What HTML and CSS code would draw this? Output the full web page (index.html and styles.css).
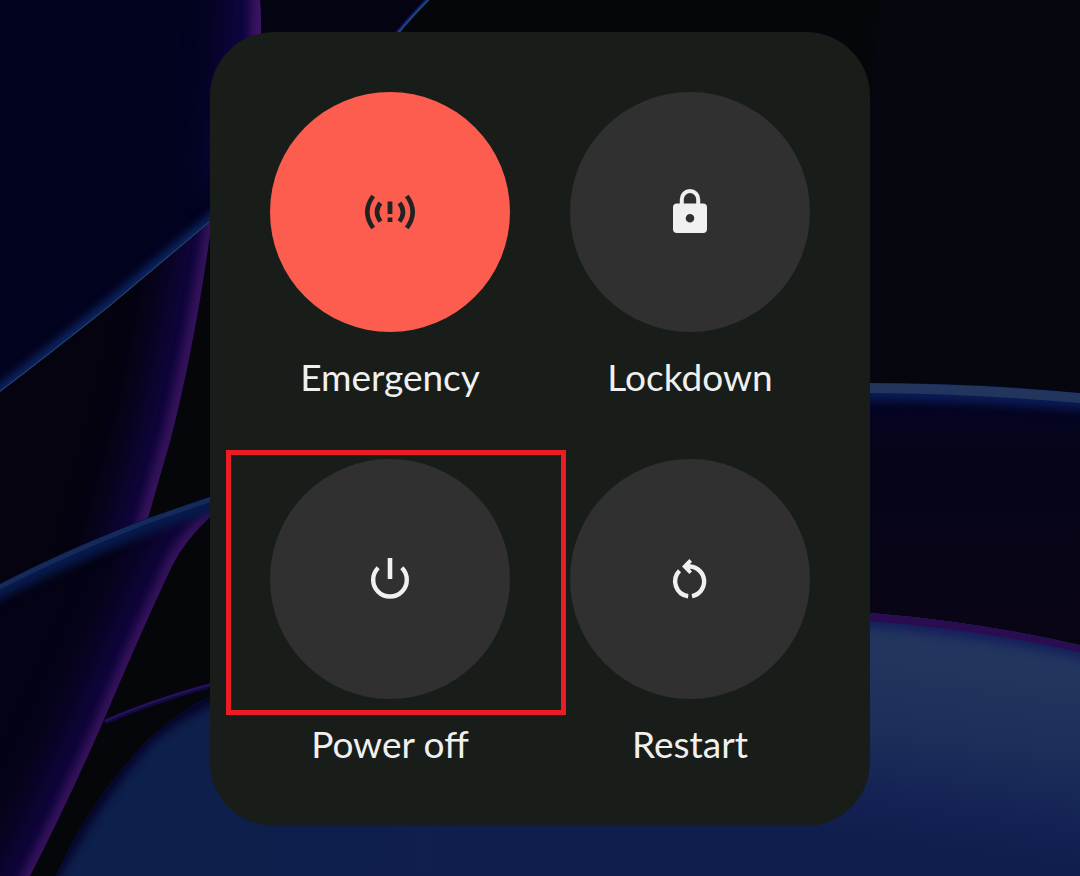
FILE: index.html
```html
<!DOCTYPE html>
<html lang="en">
<head>
    <meta charset="UTF-8">
    <meta name="viewport" content="width=device-width, initial-scale=1.0">
    <title>Power menu</title>
    <link rel="stylesheet" href="styles.css">
</head>
<body>
    <!-- Wallpaper -->
    <svg class="wallpaper" viewBox="0 0 1080 876" preserveAspectRatio="xMidYMid slice" aria-hidden="true">
        <defs>
            <filter id="soft" filterUnits="userSpaceOnUse" x="-100" y="-100" width="1280" height="1080" color-interpolation-filters="sRGB"><feGaussianBlur stdDeviation="4"/></filter>
            <filter id="wide" filterUnits="userSpaceOnUse" x="-100" y="-100" width="1280" height="1080" color-interpolation-filters="sRGB"><feGaussianBlur stdDeviation="20"/></filter>
            <linearGradient id="rightSheet" x1="0" y1="0" x2="0" y2="1">
                <stop offset="0" stop-color="#04042a"/>
                <stop offset="0.3" stop-color="#050518"/>
                <stop offset="1" stop-color="#0a0516"/>
            </linearGradient>
            <linearGradient id="domeFill" gradientUnits="userSpaceOnUse" x1="980" y1="670" x2="955" y2="850">
                <stop offset="0" stop-color="#22355e"/>
                <stop offset="0.4" stop-color="#1c2e5a"/>
                <stop offset="0.75" stop-color="#142354"/>
                <stop offset="1" stop-color="#101e4e"/>
            </linearGradient>
            <linearGradient id="domeLeft" gradientUnits="userSpaceOnUse" x1="180" y1="0" x2="500" y2="0">
                <stop offset="0" stop-color="#0d1f4b"/>
                <stop offset="1" stop-color="#0d1f4b" stop-opacity="0"/>
            </linearGradient>
            <clipPath id="clipA"><path d="M0 0H260Q266 60 240 190L210 222Q160 264 110 306Q50 354 0 392Z"/></clipPath>
            <clipPath id="clipB"><path d="M0 392Q50 354 110 306L212 220Q196 340 171 438L148 518L0 588Z"/></clipPath>
            <clipPath id="clipC"><path d="M0 584Q60 552 148 518L212 496V515Q185 540 172 566Q140 634 103 722Q66 806 30 876H0Z"/></clipPath>
            <clipPath id="clipD"><path d="M868 383Q980 383 1080 393V650H868Z"/></clipPath>
            <clipPath id="clipE"><path d="M56 876Q90 800 148 740Q180 710 212 696Q520 560 870 613Q980 622 1080 645V876Z"/></clipPath>
        </defs>
        <rect width="1080" height="876" fill="#05060a"/>
        <path d="M880 0H1080V400H840Z" fill="#06070e"/>
        <!-- top strip -->
        <path d="M250 0H428L397 33H250Z" fill="#030312"/>
        <path d="M429 -2Q411 16 397 33" fill="none" stroke="#10106a" stroke-width="4"/>
        <path d="M430 -2Q412 16 398 33" fill="none" stroke="#1c4a70" stroke-width="2"/>
        <!-- left sheets -->
        <g clip-path="url(#clipB)">
            <rect y="200" width="220" height="400" fill="#04030f"/>
            <path d="M224 150Q196 340 171 438L130 580" fill="none" stroke="#120544" stroke-width="66" filter="url(#wide)"/>
            <path d="M217 200Q196 340 171 438L140 545" fill="none" stroke="#35125a" stroke-width="18" filter="url(#soft)"/>
        </g>
        <g clip-path="url(#clipA)">
            <rect width="270" height="400" fill="#02031f"/>
            <path d="M258 -60Q266 60 240 190" fill="none" stroke="#12064a" stroke-width="60" filter="url(#wide)"/>
            <path d="M259 -40Q266 60 240 190" fill="none" stroke="#3a1360" stroke-width="20" filter="url(#soft)"/>
            <path d="M-20 408Q50 354 110 306L230 206" fill="none" stroke="#0c2462" stroke-width="14" filter="url(#soft)"/>
            <path d="M0 392Q50 354 110 306L210 222" fill="none" stroke="#2a4664" stroke-width="2"/>
        </g>
        <g clip-path="url(#clipC)">
            <rect y="480" width="220" height="396" fill="#040316"/>
            <path d="M214 512Q185 540 172 566Q140 634 103 722Q66 806 5 926" fill="none" stroke="#120544" stroke-width="60" filter="url(#wide)"/>
            <path d="M214 512Q185 540 172 566Q140 634 103 722Q66 806 20 896" fill="none" stroke="#35125a" stroke-width="16" filter="url(#soft)"/>
            <path d="M-20 598Q60 557 148 523L230 495" fill="none" stroke="#071a4c" stroke-width="20" filter="url(#soft)"/>
            <path d="M-10 592Q60 555 148 521L220 496" fill="none" stroke="#132a5a" stroke-width="5"/>
        </g>
        <path d="M105 722Q150 702 212 685" fill="none" stroke="#100a40" stroke-width="5"/>
        <path d="M105 721Q150 701 212 684" fill="none" stroke="#2b1258" stroke-width="2"/>
        <!-- right sheet -->
        <g clip-path="url(#clipD)">
            <rect x="860" y="380" width="220" height="260" fill="url(#rightSheet)"/>
            <path d="M830 388Q980 388 1120 401" fill="none" stroke="#0a1c56" stroke-width="24" filter="url(#soft)"/>
            <path d="M850 388Q980 388 1100 400" fill="none" stroke="#22355c" stroke-width="10"/>
        </g>
        <!-- dome at the bottom -->
        <g clip-path="url(#clipE)">
            <rect y="560" width="1080" height="316" fill="url(#domeFill)"/>
            <rect y="560" width="500" height="316" fill="url(#domeLeft)"/>
            <path d="M20 920Q80 800 142 732Q174 704 230 680" fill="none" stroke="#06042a" stroke-width="30" filter="url(#soft)"/>
            <path d="M840 614Q980 624 1110 654" fill="none" stroke="#16205c" stroke-width="22" filter="url(#soft)"/>
            <path d="M860 616Q980 624 1090 650" fill="none" stroke="#2a0d50" stroke-width="9"/>
        </g>
    </svg>

    <!-- Power menu -->
    <main class="menu">
        <div class="item">
            <button class="circle emergency" id="emergency" aria-labelledby="emergency-label">
                <svg viewBox="0 0 60 60" fill="none" stroke="currentColor" stroke-width="4.6">
                    <path d="M13.2 14Q1.4 30 13.2 46M20.5 21Q13.5 30 20.5 39.5M39.5 21Q46.5 30 39.5 39.5M46.8 14Q58.6 30 46.8 46"/>
                    <path d="M30 19.5V32M30 35.5V40" stroke-width="4.8"/>
                </svg>
            </button>
            <label class="label" id="emergency-label" for="emergency">Emergency</label>
        </div>
        <div class="item">
            <button class="circle" id="lockdown" aria-labelledby="lockdown-label">
                <svg viewBox="0 0 60 60" fill="currentColor">
                    <path d="M21.8 23V17.3a8.2 8.2 0 0 1 16.4 0V23" fill="none" stroke="currentColor" stroke-width="4"/>
                    <path fill-rule="evenodd" d="M17 21.5H43a4 4 0 0 1 4 4V47a4 4 0 0 1-4 4H17a4 4 0 0 1-4-4V25.500a4 4 0 0 1 4-4ZM30 32a4.300 4.300 0 1 0 0 8.600a4.300 4.300 0 1 0 0-8.600Z"/>
                </svg>
            </button>
            <label class="label" id="lockdown-label" for="lockdown">Lockdown</label>
        </div>
        <div class="item selected">
            <button class="circle" id="power" aria-labelledby="power-label">
                <svg viewBox="0 0 60 60" fill="none" stroke="currentColor" stroke-width="4.4">
                    <path d="M18.2 18.8A16.800 16.800 0 1 0 41.8 18.8"/>
                    <path d="M30 9V30" stroke-width="4.6"/>
                </svg>
            </button>
            <label class="label" id="power-label" for="power">Power off</label>
        </div>
        <div class="item">
            <button class="circle" id="restart" aria-labelledby="restart-label">
                <svg viewBox="0 0 60 60" fill="none" stroke="currentColor" stroke-width="4.4">
                    <path d="M19.5 21.8A15 15 0 0 0 28.2 47.200M32 47.200A15 15 0 0 0 30 17.500H26"/>
                    <path d="M22 17.500L29.300 10L32 12.700L30 15V20L32 22.500L29.300 25Z" fill="currentColor" stroke="none"/>
                </svg>
            </button>
            <label class="label" id="restart-label" for="restart">Restart</label>
        </div>
    </main>
</body>
</html>
```
FILE: styles.css
```css
* {
    box-sizing: border-box;
}
body {
    margin: 0;
    min-height: 100vh;
    padding: 32px 16px;
    background-color: #05060a;
    font-family: Lato, "Liberation Sans", sans-serif;
}
.wallpaper {
    position: fixed;
    top: 0;
    left: 0;
    z-index: -1;
    width: 100%;
    height: 100%;
}
.menu {
    display: grid;
    grid-template-columns: auto auto;
    gap: 60px;
    width: fit-content;
    margin: 0 auto;
    padding: 60px;
    border-radius: 64px;
    background-color: #191d19;
}
.item {
    position: relative;
    display: flex;
    flex-direction: column;
    align-items: center;
    gap: 23px;
}
.circle {
    display: flex;
    align-items: center;
    justify-content: center;
    width: 240px;
    height: 240px;
    padding: 0;
    border: none;
    border-radius: 50%;
    background-color: #303030;
    color: #f0f0f0;
    cursor: pointer;
}
.circle svg {
    width: 60px;
    height: 60px;
}
.emergency {
    background-color: #fc5d4e;
    color: #222222;
}
.label {
    color: #f0f0f0;
    font-size: 37px;
    line-height: 44px;
    white-space: nowrap;
}
/* red frame around the selected option */
.selected::after {
    content: "";
    box-sizing: border-box;
    position: absolute;
    top: -9px;
    left: -44px;
    width: 340px;
    height: 265px;
    border: 5px solid #ec1c24;
    pointer-events: none;
}
```
